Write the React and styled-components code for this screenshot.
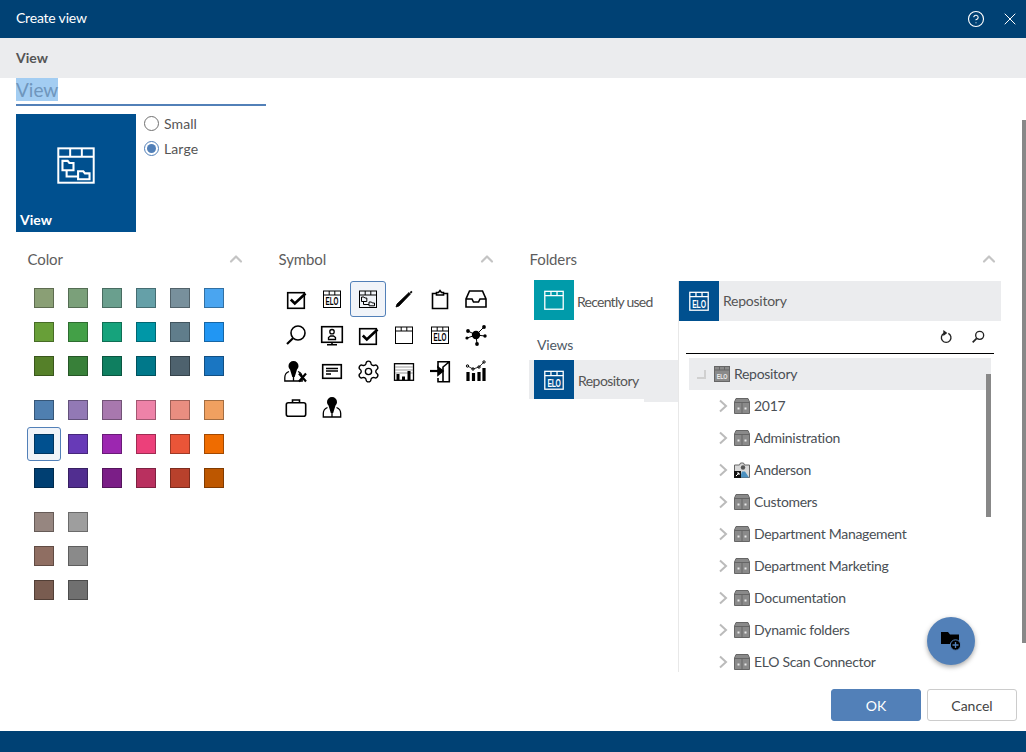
import React from 'react';
import styled, { createGlobalStyle } from 'styled-components';
import { CircleHelp, X, ChevronUp, Settings } from 'lucide-react';

const GlobalStyle = createGlobalStyle`
  html, body { margin: 0; padding: 0; background: #fff; }
  body { font-family: Lato, "Noto Sans", sans-serif; color: #4a4a4a; }
  * { box-sizing: border-box; }
`;

const Dialog = styled.div`
  position: relative;
  width: 1026px;
  height: 752px;
  display: flex;
  flex-direction: column;
  overflow: hidden;
`;

const TitleBar = styled.header`
  height: 38px;
  flex: none;
  background: #004174;
  color: #fff;
  display: flex;
  align-items: center;
  padding: 0 16px;
  font-size: 14px;
`;

const TitleText = styled.div`
  flex: 1;
  padding-bottom: 3px;
  letter-spacing: -0.2px;
`;

const TitleAction = styled.div`
  display: flex;
  margin-left: ${props => (props.$last ? '15px' : '0')};
  margin-right: ${props => (props.$last ? '-10px' : '0')};
`;

const SectionBar = styled.div`
  height: 40px;
  flex: none;
  background: #ebecee;
  display: flex;
  align-items: center;
  padding: 0 16px 2px;
  font-size: 14px;
  font-weight: 700;
  color: #555;
`;

const Content = styled.main`
  height: 594px;
  flex: none;
  overflow: hidden;
  padding-left: 16px;
`;

const NameField = styled.div`
  width: 250px;
  height: 28px;
  border-bottom: 2px solid #5280b8;
  line-height: 24px;
  font-size: 19px;
  color: #6f96bd;
`;

const Selected = styled.span`
  display: inline-block;
  height: 23px;
  background: #a3cdf2;
`;

const PreviewRow = styled.div`
  display: flex;
  gap: 8px;
  margin-top: 8px;
`;

const Tile = styled.div`
  width: 120px;
  height: 118px;
  background: #00508f;
  color: #fff;
  display: flex;
  flex-direction: column;
  align-items: center;
  padding-top: 26px;
`;

const TileLabel = styled.div`
  align-self: flex-start;
  margin-top: 21px;
  padding-left: 4px;
  font-size: 14px;
  font-weight: 700;
`;

const RadioGroup = styled.div`
  display: flex;
  flex-direction: column;
  gap: 7px;
`;

const RadioRow = styled.label`
  display: flex;
  align-items: center;
  gap: 5px;
  height: 18px;
  font-size: 14px;
  letter-spacing: 0.1px;
  color: #555;
`;

const RadioDot = styled.span`
  position: relative;
  width: 15px;
  height: 15px;
  border-radius: 50%;
  border: 1.5px solid ${props => (props.$checked ? '#5280b8' : '#707070')};
  background: #fff;
  display: flex;
  align-items: center;
  justify-content: center;
  &::after {
    content: '';
    display: ${props => (props.$checked ? 'block' : 'none')};
    width: 9px;
    height: 9px;
    border-radius: 50%;
    background: #5280b8;
  }
`;

const Columns = styled.div`
  display: flex;
  margin-top: 14px;
`;

const Column = styled.section`
  width: ${props => props.$width || 251}px;
  flex: none;
`;

const ColumnHead = styled.div`
  height: 26px;
  padding: 0 ${props => props.$pad || 24}px 0 11.5px;
  display: flex;
  align-items: center;
  justify-content: space-between;
  font-size: 15px;
  letter-spacing: -0.1px;
  color: #5d5d5d;
  svg { color: #c4c4c4; margin-right: -3px; }
`;

const ColorGrid = styled.div`
  padding: 9px 0 0 11px;
`;

const ColorGroup = styled.div`
  display: grid;
  grid-template-columns: repeat(6, 34px);
  grid-auto-rows: 34px;
  margin-bottom: 10px;
`;

const ColorCell = styled.div`
  display: flex;
  align-items: center;
  justify-content: center;
  border-radius: 3px;
  border: 1px solid ${props => (props.$active ? '#5280b8' : 'transparent')};
  background: ${props => (props.$active ? '#f1f4f9' : 'transparent')};
`;

const Swatch = styled.div`
  width: 20px;
  height: 20px;
  background: ${props => props.$color};
  border: 1px solid color-mix(in srgb, ${props => props.$color} 68%, black);
`;

const SymbolGrid = styled.div`
  display: grid;
  grid-template-columns: repeat(6, 36px);
  grid-auto-rows: 36px;
  padding: 9px 0 0 11px;
`;

const SymbolCell = styled.div`
  display: flex;
  align-items: center;
  justify-content: center;
  border-radius: 3px;
  color: #000;
  border: 1px solid ${props => (props.$active ? '#5280b8' : 'transparent')};
  background: ${props => (props.$active ? '#f1f4f9' : 'transparent')};
`;

const FolderPanes = styled.div`
  display: flex;
  padding: 8px 0 0 11px;
`;

const SidePane = styled.div`
  width: 149px;
  flex: none;
`;

const SideRow = styled.div`
  position: relative;
  height: ${props => (props.$active ? 39 : 40)}px;
  display: flex;
  align-items: center;
  gap: ${props => (props.$active ? 4 : 3)}px;
  padding-left: 5px;
  font-size: 14px;
  letter-spacing: ${props => (props.$active ? '-0.55px' : '-0.75px')};
  color: #555;
  background: ${props => (props.$active ? '#ebecee' : 'transparent')};
  &::after {
    content: '';
    display: ${props => (props.$active ? 'block' : 'none')};
    position: absolute;
    right: 0;
    bottom: -3px;
    width: 34px;
    height: 3px;
    background: #ebecee;
  }
`;

const SideText = styled.span`
  padding-top: 2px;
`;

const TileIcon = styled.div`
  width: 40px;
  height: ${props => props.$h || 40}px;
  flex: none;
  display: flex;
  align-items: center;
  justify-content: center;
  background: ${props => props.$color};
  color: #fff;
`;

const ViewsLabel = styled.div`
  height: 40px;
  padding: 16px 0 0 8px;
  font-size: 14px;
  line-height: 18px;
  letter-spacing: -0.2px;
  color: #4f5a66;
`;

const TreePane = styled.div`
  width: 323px;
  flex: none;
  height: 392px;
  overflow: hidden;
  border-left: 1px solid #e8e8e8;
  margin-top: 1px;
`;

const PaneHead = styled.div`
  height: 40px;
  width: 322px;
  background: #ebecee;
  display: flex;
  align-items: center;
  gap: 4px;
  font-size: 14px;
  letter-spacing: -0.25px;
  color: #555;
`;

const PaneHeadText = styled.span`
  padding-bottom: 1px;
`;

const TreeTools = styled.div`
  height: 33px;
  margin: 0 7px;
  width: 308px;
  border-bottom: 1px solid #000;
  display: flex;
  align-items: center;
  justify-content: flex-end;
  gap: 16px;
  padding: 0 8px 1px 0;
  color: #222;
`;

const Tree = styled.ul`
  list-style: none;
  margin: 4px 0 0 10px;
  padding: 0;
  width: 302px;
`;

const TreeRow = styled.li`
  height: 32px;
  display: flex;
  align-items: center;
  font-size: 14px;
  letter-spacing: -0.3px;
  color: #4a4f55;
  padding-left: ${props => (props.$root ? 8 : 29)}px;
  background: ${props => (props.$root ? '#ebecee' : 'transparent')};
`;

const RootMark = styled.span`
  width: 9px;
  height: 9px;
  margin-right: 8px;
  border-right: 2px solid #d0d0d0;
  border-bottom: 2px solid #d0d0d0;
`;

const Arrow = styled.svg`
  width: 10px;
  height: 14px;
  margin-right: 6px;
  flex: none;
  color: #bbb;
`;

const TreeLabel = styled.span`
  margin-left: 4px;
  padding-bottom: 2px;
`;

const Footer = styled.footer`
  flex: 1;
  display: flex;
  justify-content: flex-end;
  align-items: flex-start;
  gap: 6px;
  padding: 17px 9px 0 0;
`;

const Button = styled.button`
  width: 90px;
  height: 32px;
  border-radius: 3px;
  font-family: inherit;
  font-size: 14px;
  color: ${props => (props.$primary ? '#fff' : '#444')};
  background: ${props => (props.$primary ? '#5280b8' : '#fff')};
  border: 1px solid ${props => (props.$primary ? '#5280b8' : '#ccc')};
`;

const BottomBar = styled.div`
  height: 21px;
  flex: none;
  background: #004174;
`;

const Fab = styled.div`
  position: absolute;
  left: 927px;
  top: 617px;
  width: 48px;
  height: 48px;
  border-radius: 50%;
  background: #5280b8;
  box-shadow: 0 2px 5px rgba(0, 0, 0, 0.35);
  display: flex;
  align-items: center;
  justify-content: center;
`;

const Scrollbar = styled.div`
  position: absolute;
  background: #888;
  left: ${props => props.$left}px;
  top: ${props => props.$top}px;
  width: ${props => props.$width}px;
  height: ${props => props.$height}px;
`;

const Svg = ({ size = 24, children, ...rest }) => (
  <svg width={size} height={size} viewBox="0 0 24 24" fill="none" stroke="currentColor" strokeWidth="1.6" {...rest}>
    {children}
  </svg>
);

const WindowFrame = ({ children }) => (
  <>
    <rect x="3.5" y="4" width="17" height="16.5" />
    <path d="M3.5 8h17M9.2 4v4M14.8 4v4" />
    {children}
  </>
);

// condensed block letters, as in the ELO mark
const EloText = () => (
  <text transform="translate(12 18.2) scale(0.6 1)" textAnchor="middle" fontFamily="Liberation Sans, sans-serif" fontSize="10.5" fontWeight="700" fill="currentColor" stroke="none">ELO</text>
);

const FoldersInner = () => (
  <path d="M5.500 10h2.500l.8 1h2v3.500H5.500zM7.500 14.500v3H13M13 15h2.500l.8 1h2.200v2.800H13z" strokeWidth="1" />
);

const IconWindow = ({ size, strokeWidth }) => <Svg size={size} strokeWidth={strokeWidth}><WindowFrame /></Svg>;
const IconElo = ({ size, strokeWidth }) => <Svg size={size} strokeWidth={strokeWidth}><WindowFrame><EloText /></WindowFrame></Svg>;
const IconTreeView = ({ size, strokeWidth }) => <Svg size={size} strokeWidth={strokeWidth}><WindowFrame><FoldersInner /></WindowFrame></Svg>;

const IconCheck = () => (
  <Svg>
    <rect x="3.700" y="5.700" width="16.600" height="15.600" />
    <path d="M6.800 12.500l4 4L21.500 6.500" strokeWidth="2.600" />
  </Svg>
);
const IconPen = () => (
  <Svg>
    <path d="M4 20l1-3L17 5.500l1.500 1.500L7 19z" fill="currentColor" strokeWidth="0.8" />
    <path d="M18.500 4.500l1.300 1.300" strokeWidth="2" />
  </Svg>
);
const IconClipboard = () => (
  <Svg>
    <path d="M8.500 6.500h-4v15h15v-15h-4" />
    <path d="M8.500 8V5.500h2L12 3.500l1.500 2h2V8z" />
  </Svg>
);
const IconTray = () => (
  <Svg>
    <path d="M5.500 4h13L22 12v8H2v-8zM2 12h6l1.500 3h5l1.500-3h6" />
  </Svg>
);
const IconSearch = () => (
  <Svg>
    <circle cx="14" cy="10" r="7" />
    <path d="M9 15.200L3 21" strokeWidth="2.200" />
  </Svg>
);
const IconMonitor = () => (
  <Svg>
    <rect x="1.700" y="3.700" width="20.600" height="15.600" />
    <circle cx="12" cy="8.700" r="2.200" strokeWidth="1.300" />
    <path d="M8.500 16.500v-2l2-1.500h3l2 1.500v2z" strokeWidth="1.300" />
    <path d="M12 19.500v2M7 21.700h10" />
  </Svg>
);
const IconNetwork = () => (
  <Svg stroke="none">
    <g fill="currentColor">
      <circle cx="12" cy="12" r="4.200" />
      <circle cx="4" cy="8" r="1.900" />
      <circle cx="20" cy="4" r="1.900" />
      <circle cx="3" cy="15" r="1.600" />
      <circle cx="21" cy="13" r="1.700" />
      <circle cx="13" cy="21" r="1.900" />
    </g>
    <path d="M12 12L4 8M12 12L20 4M12 12L3 15M12 12L21 13M12 12L13 21" stroke="currentColor" strokeWidth="1" />
  </Svg>
);
const IconPerson = ({ cross }) => (
  <Svg>
    <g transform={cross ? 'translate(-2.500 0)' : undefined}>
      <path d="M7 7a5 5 0 0 1 10 0c0 1.600-.7 2.600-1.500 3.500L13.200 18h-2.400L8.500 10.500C7.700 9.600 7 8.600 7 7z" fill="currentColor" stroke="none" />
      <path d="M7.500 12.500c-2.500 1-4.200 3-4.200 6V22h17.400v-3.500c0-3-1.700-5-4.200-6" strokeWidth="1.300" />
      <path d="M12 18v4" strokeWidth="1.300" />
    </g>
    {cross && <path d="M15 14.500l7 8M22 14.500l-7 8" strokeWidth="2.200" />}
  </Svg>
);
const IconCard = () => (
  <Svg>
    <rect x="2.700" y="5.700" width="18.600" height="13.600" />
    <path d="M6 9.500h12M6 12h12M6 15h5" strokeWidth="1.600" />
  </Svg>
);
const IconChart = () => (
  <Svg>
    <rect x="2.500" y="4.700" width="19" height="16.600" strokeWidth="1.300" />
    <path d="M3 8h18M3 11h18M3 14h18" stroke="#999" strokeWidth="1" />
    <path d="M6 21v-6M11.500 21v-3.500M17 21v-9" strokeWidth="3" />
  </Svg>
);
const IconImport = () => (
  <Svg>
    <path d="M10 9V2.700h11.300v20H10V19M21 3L15 8v14" />
    <path d="M2 12h10" strokeWidth="2.200" />
    <path d="M10 8l5 4-5 4z" fill="currentColor" />
  </Svg>
);
const IconStats = () => (
  <Svg>
    <path d="M4 22v-9M9.500 22v-8M15 22v-9M20 22V9" strokeWidth="3.200" />
    <path d="M3.500 7l5.500 3 6-2 5-5" strokeWidth="0.800" />
    <circle cx="3.500" cy="7" r="1.200" strokeWidth="1" />
    <circle cx="9" cy="10" r="1.200" strokeWidth="1" />
    <circle cx="15" cy="8" r="1.200" strokeWidth="1" />
    <circle cx="20" cy="3" r="1.200" strokeWidth="1" />
  </Svg>
);
const IconCase = () => (
  <Svg>
    <rect x="2.300" y="7.700" width="19.400" height="13.600" rx="2" />
    <path d="M8.500 7.500V5h7v2.500" />
  </Svg>
);
const IconGear = () => <Settings size={25} strokeWidth={1.3} />;

const IconRefresh = () => (
  <Svg size={16} strokeWidth="2">
    <path d="M9 6.500a7.200 7.200 0 1 0 6.500 0" />
    <path d="M8 1.500v9l6-4.500z" fill="currentColor" stroke="none" />
  </Svg>
);
const IconFind = () => (
  <Svg size={16} strokeWidth="2">
    <circle cx="14.500" cy="9.500" r="6" />
    <path d="M10 14L4 20" strokeWidth="2.600" />
  </Svg>
);

const IconFolderAdd = () => (
  <svg width="24" height="24" viewBox="0 0 24 24">
    <path d="M2 3h7l2 2.500h9v9.500H2z" fill="#000" />
    <circle cx="16.500" cy="16" r="5.200" fill="#000" stroke="#5280b8" strokeWidth="1" />
    <path d="M13.500 16h6M16.500 13v6" stroke="#5280b8" strokeWidth="1.300" />
  </svg>
);

const Cabinet = () => (
  <svg width="16" height="16" viewBox="0 0 16 16">
    <path d="M.5 4L2 .5h12L15.500 4v11.500H.5z" fill="#8a8a8a" stroke="#666" />
    <path d="M1 4.500h14M8 4.500v11" stroke="#666" fill="none" />
    <rect x="3.500" y="9.500" width="2" height="2" fill="#e8e8e8" />
    <rect x="10.500" y="9.500" width="2" height="2" fill="#e8e8e8" />
  </svg>
);

const PersonFolder = () => (
  <svg width="16" height="16" viewBox="0 0 16 16">
    <path d="M0.5 3h5l1-2h3l1 2h5v12.500H.5z" fill="#d8d8d8" stroke="#666" />
    <circle cx="9" cy="5.500" r="2.200" fill="#555" />
    <path d="M6 15.500l2-6h3l4 6z" fill="#4a90c0" />
    <rect x="0" y="9" width="7" height="7" fill="#111" />
    <path d="M2 14l3-3M3 11h2v2" stroke="#fff" strokeWidth="1" fill="none" />
  </svg>
);

const RepoIcon = () => (
  <svg width="16" height="16" viewBox="0 0 16 16">
    <rect x="0.500" y="0.500" width="15" height="15" fill="#8a8a8a" stroke="#666" />
    <path d="M1 4h14M5.500 1v3M10.500 1v3" stroke="#666" fill="none" />
    <text transform="translate(8 13) scale(0.67 1)" textAnchor="middle" fontFamily="Liberation Sans, sans-serif" fontSize="8" fontWeight="700" fill="#eee">ELO</text>
  </svg>
);

const colorGroups = [
  [
    '#8a9f75', '#7ba07a', '#6a9f8e', '#65a0a8', '#78909c', '#4aa5f0',
    '#689f38', '#43a047', '#16a37c', '#0097a7', '#607d8b', '#2196f3',
    '#558029', '#388039', '#0f7f60', '#00788a', '#4e626e', '#1a76c2',
  ],
  [
    '#4f7fb0', '#9279b5', '#a878ae', '#ee82a8', '#e98e80', '#f0a060',
    '#00508f', '#673ab7', '#9c27b0', '#ec407a', '#ea5538', '#ef6c00',
    '#003f72', '#512e90', '#7b1e87', '#b9305f', '#b8412c', '#bd5700',
  ],
  [
    '#968680', '#9e9e9e', null, null, null, null,
    '#8f6e62', '#8a8a8a', null, null, null, null,
    '#795c50', '#707070', null, null, null, null,
  ],
];

const symbols = [
  <IconCheck />, <IconElo />, <IconTreeView />, <IconPen />, <IconClipboard />, <IconTray />,
  <IconSearch />, <IconMonitor />, <IconCheck />, <IconWindow />, <IconElo />, <IconNetwork />,
  <IconPerson cross />, <IconCard />, <IconGear />, <IconChart />, <IconImport />, <IconStats />,
  <IconCase />, <IconPerson />,
];

const folders = [
  '2017', 'Administration', 'Anderson', 'Customers', 'Department Management',
  'Department Marketing', 'Documentation', 'Dynamic folders', 'ELO Scan Connector',
];

const App = () => (
  <Dialog>
    <GlobalStyle />
    <TitleBar>
      <TitleText>Create view</TitleText>
      <TitleAction><CircleHelp size={18} strokeWidth={1.5} /></TitleAction>
      <TitleAction $last><X size={20} strokeWidth={1.2} /></TitleAction>
    </TitleBar>
    <SectionBar>View</SectionBar>
    <Content>
      <NameField><Selected>View</Selected></NameField>
      <PreviewRow>
        <Tile>
          <IconTreeView size={50} strokeWidth={0.95} />
          <TileLabel>View</TileLabel>
        </Tile>
        <RadioGroup>
          <RadioRow><RadioDot />Small</RadioRow>
          <RadioRow><RadioDot $checked />Large</RadioRow>
        </RadioGroup>
      </PreviewRow>
      <Columns>
        <Column>
          <ColumnHead>Color <ChevronUp size={20} strokeWidth={2.6} /></ColumnHead>
          <ColorGrid>
            {colorGroups.map((group, g) => (
              <ColorGroup key={g}>
                {group.map((color, i) => (
                  <ColorCell key={i} $active={color === '#00508f'}>
                    {color && <Swatch $color={color} />}
                  </ColorCell>
                ))}
              </ColorGroup>
            ))}
          </ColorGrid>
        </Column>
        <Column>
          <ColumnHead>Symbol <ChevronUp size={20} strokeWidth={2.6} /></ColumnHead>
          <SymbolGrid>
            {symbols.map((icon, i) => (
              <SymbolCell key={i} $active={i === 2}>{icon}</SymbolCell>
            ))}
          </SymbolGrid>
        </Column>
        <Column $width={492}>
          <ColumnHead $pad={14}>Folders <ChevronUp size={20} strokeWidth={2.6} /></ColumnHead>
          <FolderPanes>
            <SidePane>
              <SideRow>
                <TileIcon $color="#009baa"><IconWindow size={26} strokeWidth={1.2} /></TileIcon>
                <SideText>Recently used</SideText>
              </SideRow>
              <ViewsLabel>Views</ViewsLabel>
              <SideRow $active>
                <TileIcon $color="#00508f" $h={39}><IconElo size={26} strokeWidth={1.2} /></TileIcon>
                <SideText>Repository</SideText>
              </SideRow>
            </SidePane>
            <TreePane>
              <PaneHead>
                <TileIcon $color="#00508f"><IconElo size={26} strokeWidth={1.2} /></TileIcon>
                <PaneHeadText>Repository</PaneHeadText>
              </PaneHead>
              <TreeTools>
                <IconRefresh />
                <IconFind />
              </TreeTools>
              <Tree>
                <TreeRow $root>
                  <RootMark />
                  <RepoIcon />
                  <TreeLabel>Repository</TreeLabel>
                </TreeRow>
                {folders.map(name => (
                  <TreeRow key={name}>
                    <Arrow viewBox="0 0 10 14" fill="none" stroke="currentColor" strokeWidth="2">
                      <path d="M2 1.500L8 7l-6 5.500" />
                    </Arrow>
                    {name === 'Anderson' ? <PersonFolder /> : <Cabinet />}
                    <TreeLabel>{name}</TreeLabel>
                  </TreeRow>
                ))}
              </Tree>
            </TreePane>
          </FolderPanes>
        </Column>
      </Columns>
    </Content>
    <Footer>
      <Button $primary>OK</Button>
      <Button>Cancel</Button>
    </Footer>
    <BottomBar />
    <Scrollbar $left={1022} $top={120} $width={4} $height={523} />
    <Scrollbar $left={986} $top={374} $width={5} $height={143} />
    <Fab><IconFolderAdd /></Fab>
  </Dialog>
);

export default App;
